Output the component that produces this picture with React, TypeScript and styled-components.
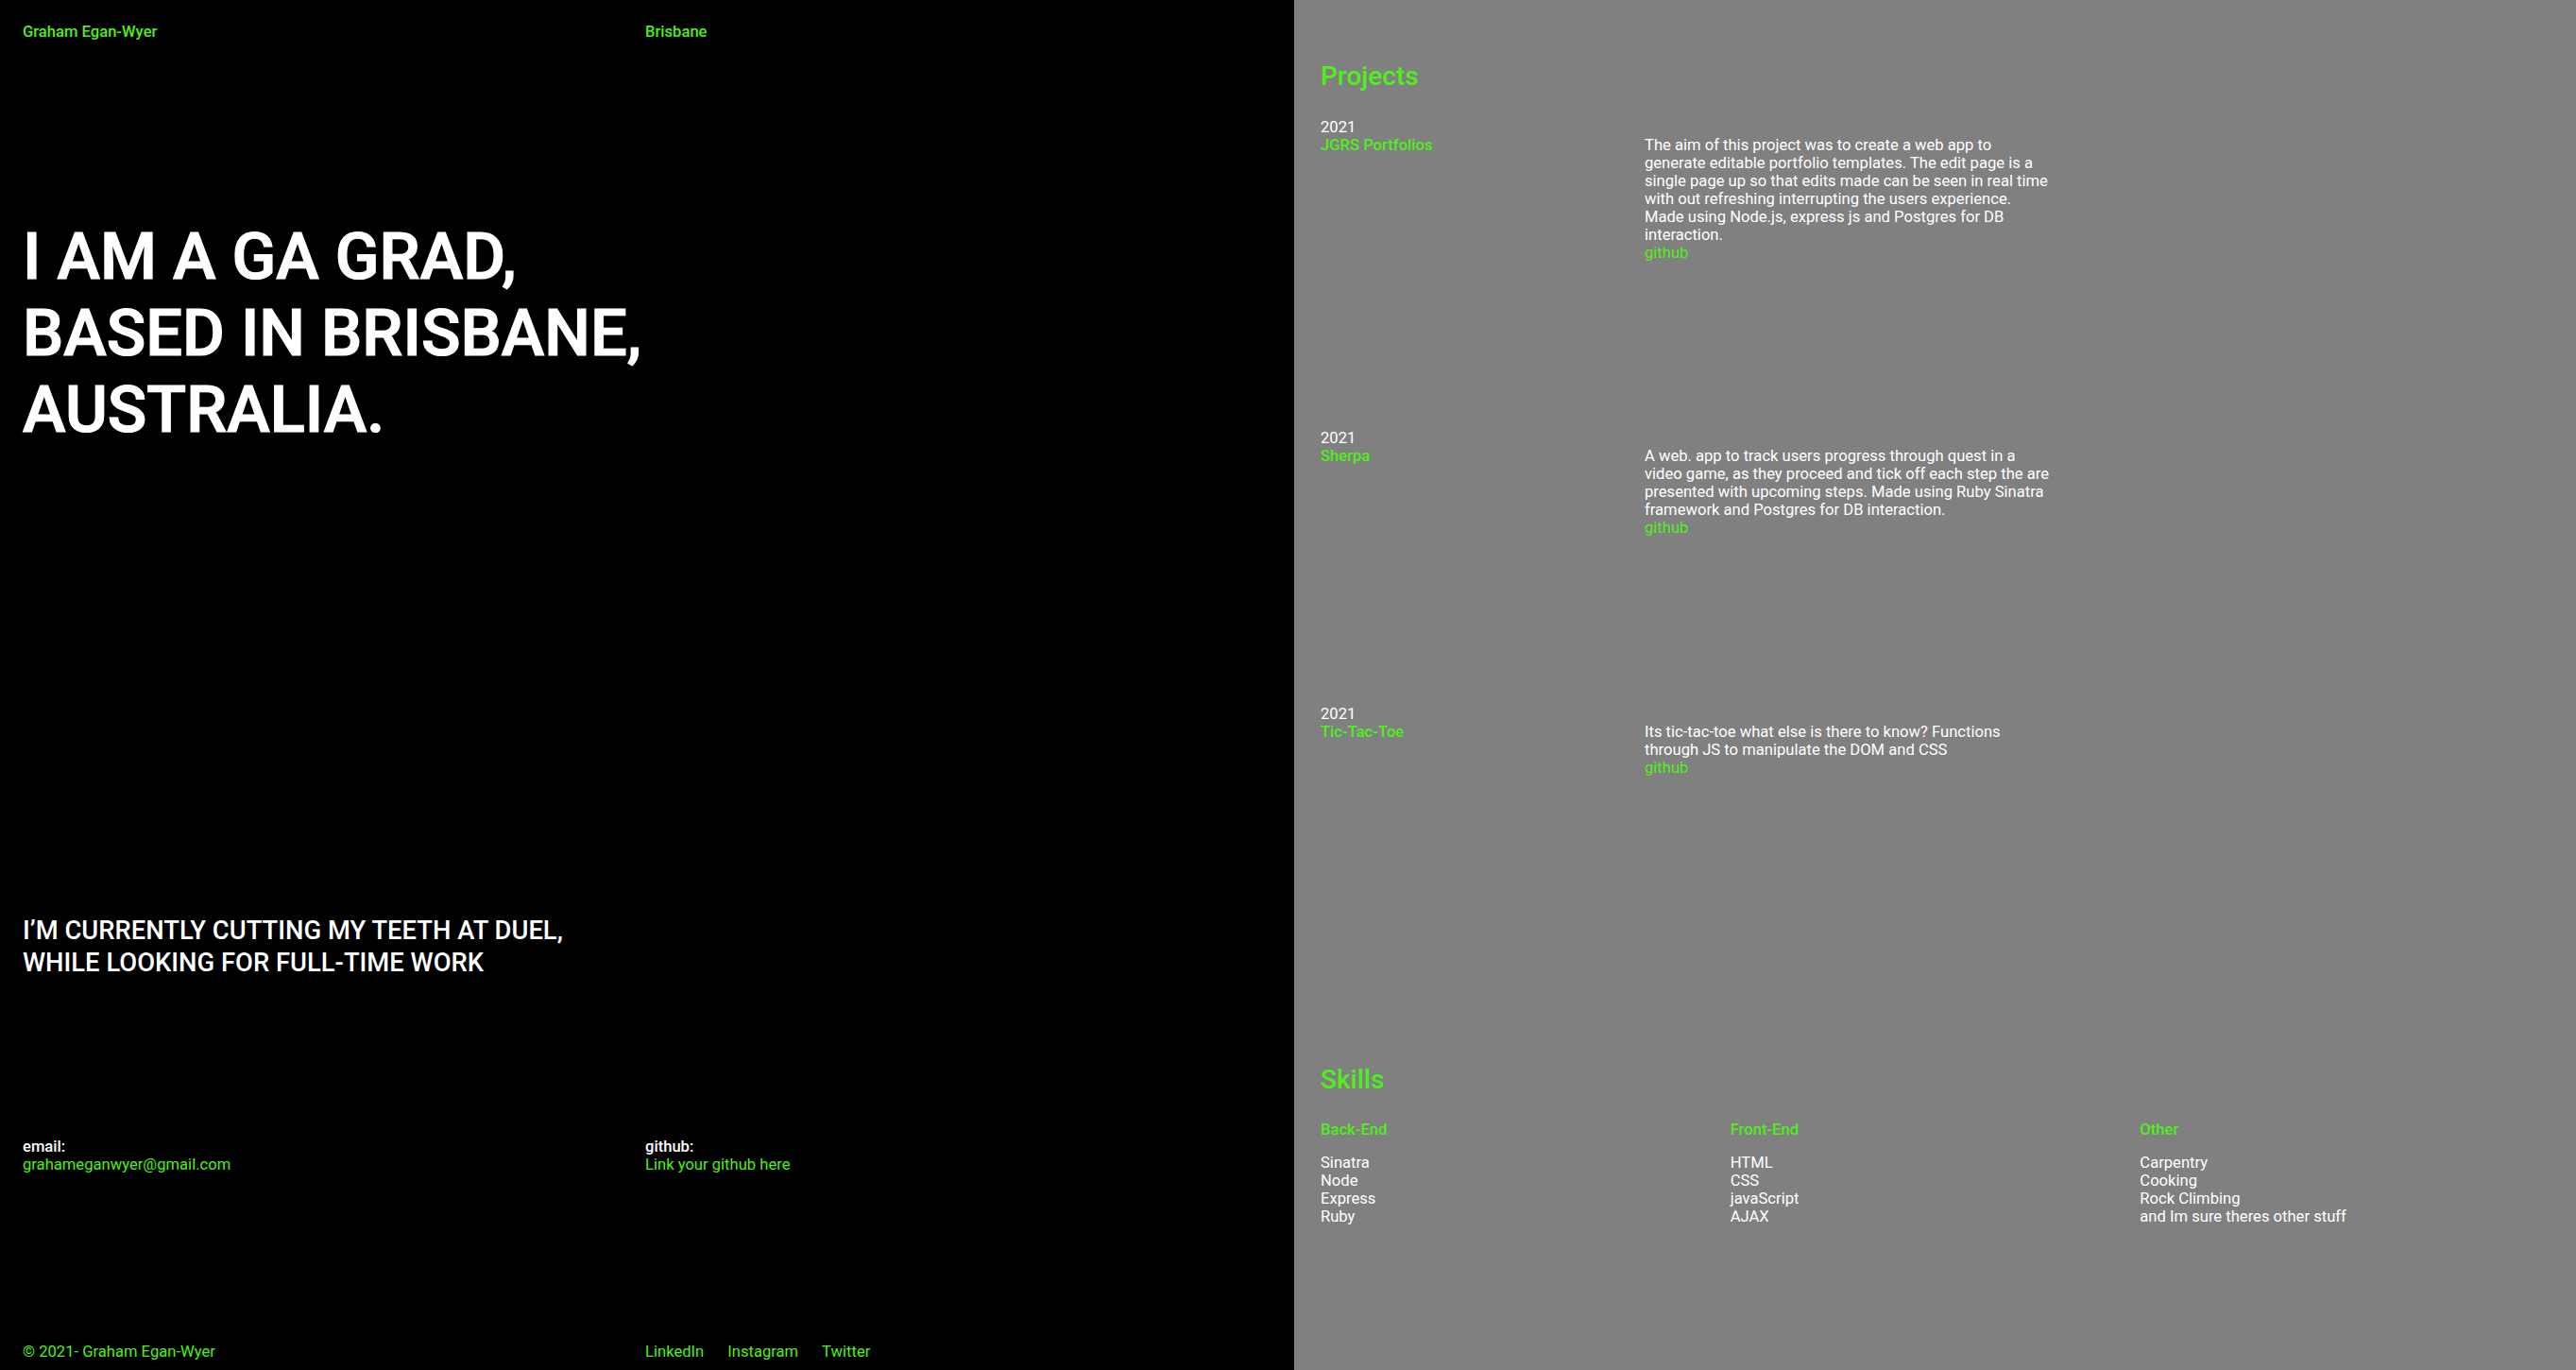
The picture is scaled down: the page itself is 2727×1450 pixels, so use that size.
import React from "react";
import styled, { createGlobalStyle } from "styled-components";

const GREEN = "#4fef1b";

const Global = createGlobalStyle`
  html, body {
    margin: 0;
    padding: 0;
    background: #000;
  }
  body {
    font-family: Roboto, "Liberation Sans", Arial, sans-serif;
    font-size: 16.6px;
    line-height: 19px;
    color: #fff;
  }
  * { box-sizing: border-box; }
  a { text-decoration: none; }
`;

const Page = styled.div`
  display: grid;
  grid-template-columns: 1370px 1fr;
  min-height: 1450px;
`;

const LeftPanel = styled.section`
  background: #000;
  padding: 24px 24px 8px;
  display: flex;
  flex-direction: column;
`;

const TwoCol = styled.div<{ $mt?: number }>`
  display: grid;
  grid-template-columns: 659px 1fr;
  margin-top: ${(p) => p.$mt ?? 0}px;
`;

const GreenLabel = styled.div`
  color: ${GREEN};
  font-weight: 500;
`;

const Headline = styled.h1`
  margin: 188px 0 0;
  font-size: 68.6px;
  line-height: 81px;
  font-weight: 500;
  -webkit-text-stroke: 1.2px #fff;
  color: #fff;
`;

const Subhead = styled.h2`
  margin: 495px 0 0;
  font-size: 27.4px;
  line-height: 33.5px;
  font-weight: 500;
  color: #fff;
`;

const ContactBlock = styled.div`
  display: flex;
  flex-direction: column;
`;

const ContactLabel = styled.span`
  font-weight: 500;
  color: #fff;
`;

const GreenLink = styled.a`
  color: ${GREEN};
  font-weight: 400;
`;

const Links = styled.nav`
  display: flex;
  gap: 25px;
`;

const RightPanel = styled.section`
  background: #808080;
  padding: 24px 28px;
  display: flex;
  flex-direction: column;
`;

const SectionTitle = styled.h2<{ $mt: number }>`
  margin: ${(p) => p.$mt}px 0 0;
  font-size: 28px;
  line-height: 33.6px;
  font-weight: 500;
  color: ${GREEN};
`;

const ProjectList = styled.div`
  display: flex;
  flex-direction: column;
  gap: 177.5px;
  margin-top: 27px;
`;

const ProjectRow = styled.article`
  display: grid;
  grid-template-columns: 343px 431px;
  grid-template-areas:
    "year ."
    "name desc";
`;

const Year = styled.div`
  grid-area: year;
  color: #fff;
`;

const ProjectName = styled.div`
  grid-area: name;
  color: ${GREEN};
  font-weight: 500;
`;

const ProjectDesc = styled.div`
  grid-area: desc;
  color: #fff;
  display: flex;
  flex-direction: column;
  align-items: flex-start;
`;

const SkillsGrid = styled.div`
  display: grid;
  grid-template-columns: repeat(3, 1fr);
  margin-top: 27px;
`;

const SkillCol = styled.div`
  display: flex;
  flex-direction: column;
`;

const SkillHeading = styled.div`
  color: ${GREEN};
  font-weight: 500;
  margin-bottom: 16px;
`;

const SkillItem = styled.div`
  color: #fff;
`;

const projects = [
  {
    year: "2021",
    name: "JGRS Portfolios",
    desc: "The aim of this project was to create a web app to generate editable portfolio templates. The edit page is a single page up so that edits made can be seen in real time with out refreshing interrupting the users experience. Made using Node.js, express js and Postgres for DB interaction.",
  },
  {
    year: "2021",
    name: "Sherpa",
    desc: "A web. app to track users progress through quest in a video game, as they proceed and tick off each step the are presented with upcoming steps. Made using Ruby Sinatra framework and Postgres for DB interaction.",
  },
  {
    year: "2021",
    name: "Tic-Tac-Toe",
    desc: "Its tic-tac-toe what else is there to know? Functions through JS to manipulate the DOM and CSS",
  },
];

const skills = [
  { title: "Back-End", items: ["Sinatra", "Node", "Express", "Ruby"] },
  { title: "Front-End", items: ["HTML", "CSS", "javaScript", "AJAX"] },
  {
    title: "Other",
    items: ["Carpentry", "Cooking", "Rock Climbing", "and Im sure theres other stuff"],
  },
];

export default function App() {
  return (
    <>
      <Global />
      <Page>
        <LeftPanel>
          <TwoCol>
            <GreenLabel>Graham Egan-Wyer</GreenLabel>
            <GreenLabel>Brisbane</GreenLabel>
          </TwoCol>
          <Headline>
            I AM A GA GRAD,
            <br />
            BASED IN BRISBANE,
            <br />
            AUSTRALIA.
          </Headline>
          <Subhead>
            I’M CURRENTLY CUTTING MY TEETH AT DUEL,
            <br />
            WHILE LOOKING FOR FULL-TIME WORK
          </Subhead>
          <TwoCol $mt={168}>
            <ContactBlock>
              <ContactLabel>email:</ContactLabel>
              <GreenLink href="#">grahameganwyer@gmail.com</GreenLink>
            </ContactBlock>
            <ContactBlock>
              <ContactLabel>github:</ContactLabel>
              <GreenLink href="#">Link your github here</GreenLink>
            </ContactBlock>
          </TwoCol>
          <TwoCol $mt={179}>
            <GreenLink href="#">© 2021- Graham Egan-Wyer</GreenLink>
            <Links>
              <GreenLink href="#">LinkedIn</GreenLink>
              <GreenLink href="#">Instagram</GreenLink>
              <GreenLink href="#">Twitter</GreenLink>
            </Links>
          </TwoCol>
        </LeftPanel>
        <RightPanel>
          <SectionTitle $mt={40}>Projects</SectionTitle>
          <ProjectList>
            {projects.map((p) => (
              <ProjectRow key={p.name}>
                <Year>{p.year}</Year>
                <ProjectName>{p.name}</ProjectName>
                <ProjectDesc>
                  <span>{p.desc}</span>
                  <GreenLink href="#">github</GreenLink>
                </ProjectDesc>
              </ProjectRow>
            ))}
          </ProjectList>
          <SectionTitle $mt={304}>Skills</SectionTitle>
          <SkillsGrid>
            {skills.map((s) => (
              <SkillCol key={s.title}>
                <SkillHeading>{s.title}</SkillHeading>
                {s.items.map((i) => (
                  <SkillItem key={i}>{i}</SkillItem>
                ))}
              </SkillCol>
            ))}
          </SkillsGrid>
        </RightPanel>
      </Page>
    </>
  );
}
